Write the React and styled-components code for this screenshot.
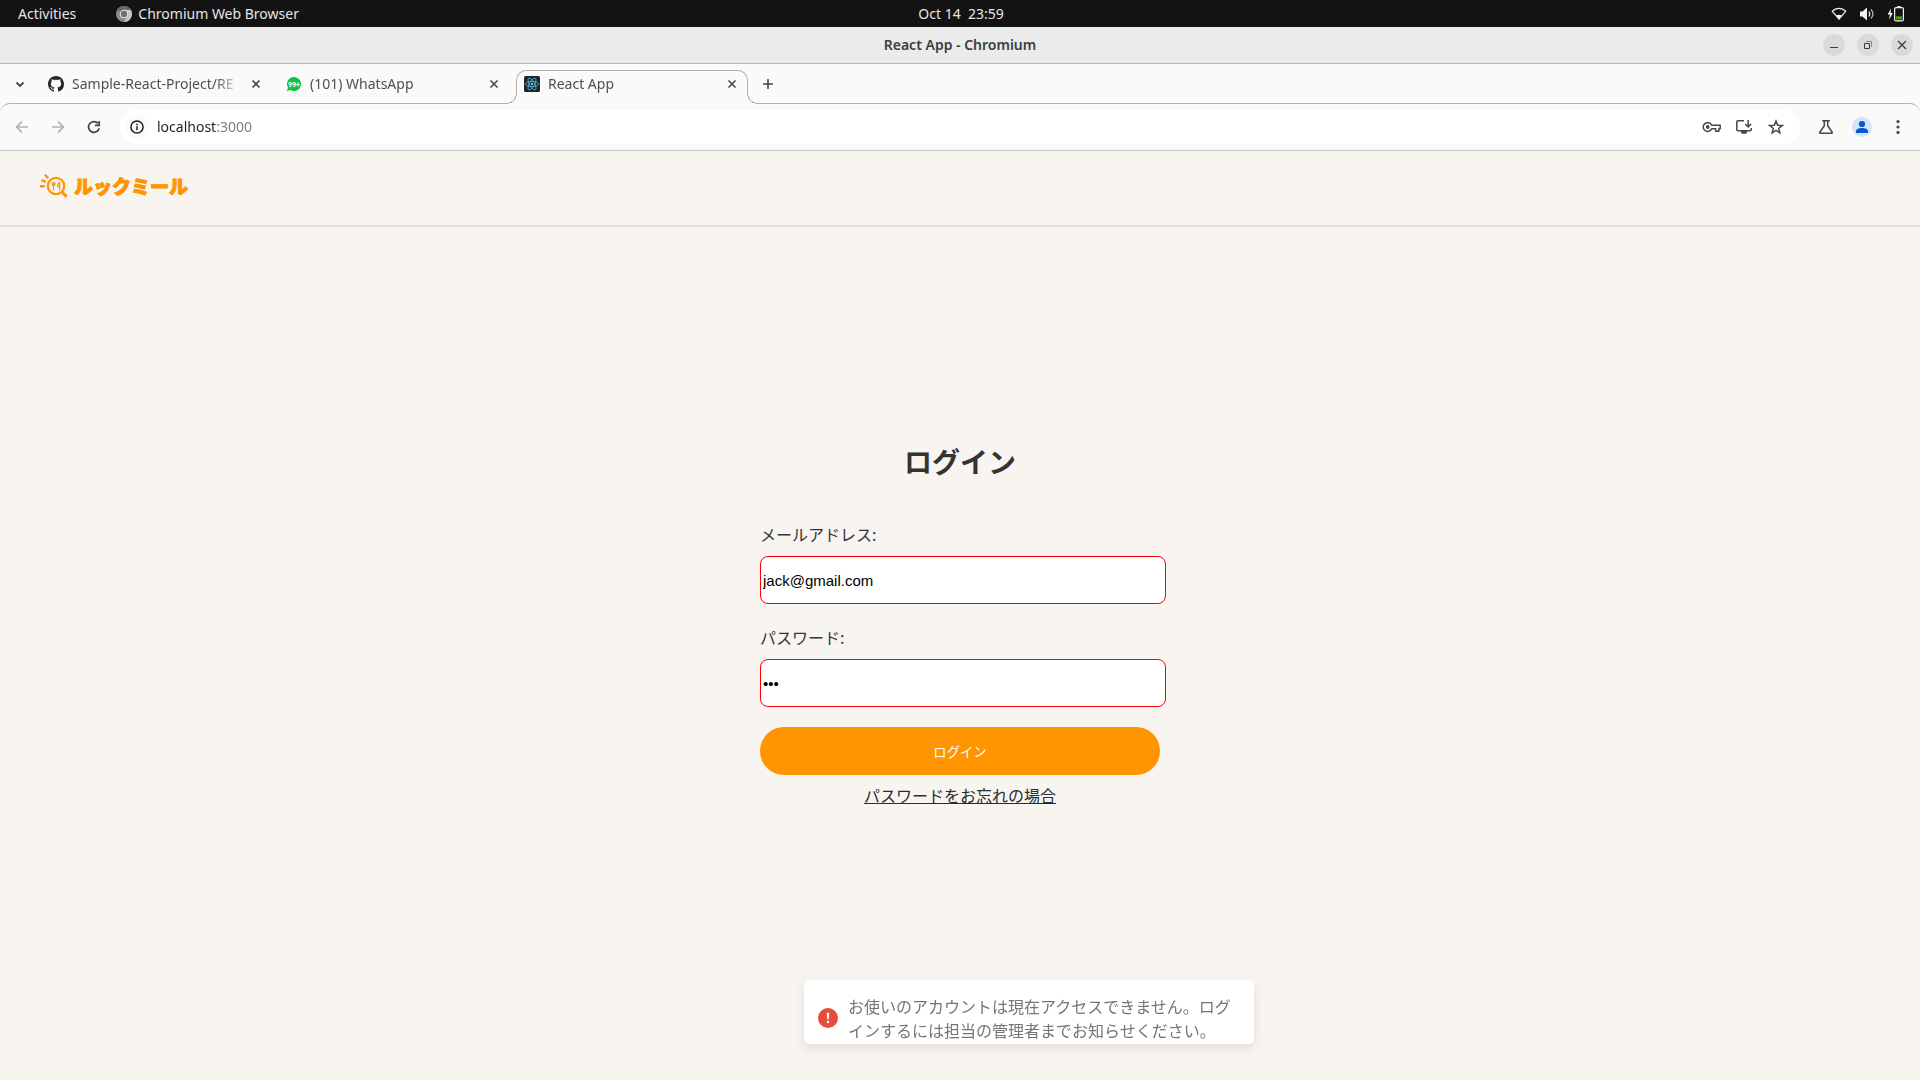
import React, { useState } from "react";
import styled, { createGlobalStyle, css } from "styled-components";

const GlobalStyle = createGlobalStyle`
  *, *::before, *::after { box-sizing: border-box; }
  body { margin: 0; background: #f8f4ef; }
  button { border: 0; padding: 0; background: none; cursor: pointer; }
`;

const uiFont = '"Noto Sans", "Open Sans", sans-serif';
const pageFont = '"Noto Sans CJK JP", sans-serif';

const Desktop = styled.div`
  display: flex;
  flex-direction: column;
  min-height: 100vh;
  font-family: ${uiFont};
`;

/* ---------- system bar ---------- */

const SystemBar = styled.header`
  display: grid;
  grid-template-columns: 1fr auto 1fr;
  align-items: center;
  height: 27px;
  padding: 0 16px 0 18px;
  background: #131313;
  color: #e6e6e6;
  font-size: 14px;
  line-height: 20px;
`;

const SystemGroup = styled.div`
  display: flex;
  align-items: center;
  justify-content: ${(p) => (p.$end ? "flex-end" : "flex-start")};
  gap: ${(p) => (p.$end ? "12px" : "40px")};
`;

const SystemItem = styled.button`
  display: flex;
  align-items: center;
  gap: 6px;
  color: inherit;
  font: inherit;
  white-space: pre;
`;

/* ---------- window title ---------- */

const TitleBar = styled.div`
  display: grid;
  grid-template-columns: 1fr auto 1fr;
  align-items: center;
  height: 37px;
  padding: 0 7px;
  background: #ebebeb;
  border-bottom: 1px solid #b8b8b8;
  color: #3d3d3d;
`;

const WindowTitle = styled.span`
  grid-column: 2;
  font-size: 14px;
  line-height: 20px;
  font-weight: 600;
`;

const WindowControls = styled.div`
  display: flex;
  justify-content: flex-end;
  gap: 12px;
`;

const WindowButton = styled.button`
  display: grid;
  place-items: center;
  width: 22px;
  height: 22px;
  border-radius: 50%;
  background: #dadada;
`;

/* ---------- tabs ---------- */

const TabStrip = styled.div`
  display: flex;
  align-items: flex-end;
  gap: 6px;
  height: 39px;
  padding: 0 6px;
  background: #fafafa;
`;

const StripButton = styled.button`
  display: grid;
  place-items: center;
  width: 28px;
  height: 28px;
  margin-bottom: 5px;
`;

const activeTab = css`
  border-color: #b0b0b0;
  background: #fafafa;

  &::before,
  &::after {
    content: "";
    position: absolute;
    bottom: 0;
    width: 11px;
    height: 11px;
  }
  &::before {
    left: -11px;
    background: radial-gradient(circle at 0 0, #fafafa 10px, #b0b0b0 10px, #b0b0b0 11px, #fafafa 11px);
  }
  &::after {
    right: -11px;
    background: radial-gradient(circle at 100% 0, #fafafa 10px, #b0b0b0 10px, #b0b0b0 11px, #fafafa 11px);
  }
`;

const Tab = styled.div`
  position: relative;
  z-index: 1;
  display: flex;
  align-items: center;
  gap: 8px;
  width: 232px;
  height: 34px;
  margin-bottom: -1px;
  padding: 0 7px 7px;
  border: 1px solid transparent;
  border-bottom: 0;
  border-radius: 10px 10px 0 0;
  ${(p) => p.$active && activeTab}
`;

const TabLabel = styled.span`
  flex: 1;
  min-width: 0;
  overflow: hidden;
  white-space: nowrap;
  color: #4f4f4f;
  font-size: 14px;
  line-height: 20px;
  mask-image: linear-gradient(to right, #000 calc(100% - 24px), transparent);
`;

const TabClose = styled.button`
  display: grid;
  place-items: center;
  width: 16px;
  height: 16px;
`;

/* ---------- toolbar ---------- */

const Toolbar = styled.div`
  display: flex;
  align-items: center;
  gap: 12px;
  height: 48px;
  padding: 0 8px;
  background: #fafafa;
  border-top: 1px solid #b0b0b0;
  border-bottom: 1px solid #c4c4c4;
  border-radius: 10px 10px 0 0;
`;

const ToolbarShell = styled.div`
  background: #fafafa;
`;

const ToolGroup = styled.div`
  display: flex;
  gap: 8px;
`;

const ToolButton = styled.button`
  display: grid;
  place-items: center;
  width: 28px;
  height: 28px;
`;

const Omnibox = styled.div`
  display: flex;
  flex: 1;
  align-items: center;
  height: 34px;
  padding: 0 10px 0 5px;
  border-radius: 17px;
  background: #fff;
`;

const SiteInfo = styled.button`
  display: grid;
  place-items: center;
  width: 24px;
  height: 24px;
  border-radius: 50%;
  background: #fafafa;
`;

const AddressInput = styled.input`
  flex: 1;
  min-width: 0;
  margin-left: 8px;
  padding: 0;
  border: 0;
  outline: 0;
  font-family: ${uiFont};
  font-size: 14px;
  line-height: 20px;
  color: #7a7a7a;
  background: linear-gradient(to right, #1f1f1f 59px, #7a7a7a 59px);
  background-clip: text;
  -webkit-text-fill-color: transparent;
`;

const OmniActions = styled.div`
  display: flex;
  gap: 4px;
`;

/* ---------- web page ---------- */

const Page = styled.div`
  display: flex;
  flex: 1;
  flex-direction: column;
  background: #f8f4ef;
  color: #333;
  font-family: ${pageFont};
`;

const SiteHeader = styled.header`
  height: 76px;
  padding: 21px 40px;
  border-bottom: 2px solid #dedede;
`;

const Brand = styled.a`
  display: inline-flex;
  align-items: center;
  gap: 6px;
  color: #ff9500;
  text-decoration: none;
`;

const BrandName = styled.span`
  font-size: 19px;
  line-height: 28px;
  font-weight: 900;
  -webkit-text-stroke: 1px #ff9500;
`;

const Main = styled.main`
  display: flex;
  flex: 1;
  flex-direction: column;
  align-items: center;
  justify-content: center;
  padding-bottom: 59px;
`;

const LoginForm = styled.form`
  display: flex;
  flex-direction: column;
  width: 400px;
`;

const Heading = styled.h1`
  margin: 0 0 39px;
  font-size: 28px;
  line-height: 42px;
  font-weight: 700;
  text-align: center;
`;

const Field = styled.div`
  display: flex;
  flex-direction: column;
  gap: 9px;
  margin-bottom: 20px;
`;

const FieldLabel = styled.label`
  font-size: 16px;
  line-height: 26px;
`;

const FieldInput = styled.input`
  width: 406px;
  height: 48px;
  padding: 1px 2px;
  border: 1px solid #f00;
  border-radius: 8px;
  outline: 0;
  background: #fff;
  color: #000;
  font-family: "Liberation Sans", Arial, sans-serif;
  font-size: 15px;
`;

const SubmitButton = styled.button`
  height: 48px;
  border-radius: 24px;
  background: #ff9500;
  color: #fff;
  font-family: ${pageFont};
`;

const ForgotLink = styled.a`
  align-self: center;
  margin-top: 7px;
  color: #282c34;
  font-size: 16px;
  line-height: 26px;
`;

const ToastArea = styled.div`
  position: fixed;
  bottom: 32px;
  left: 50%;
  width: 320px;
  padding: 4px;
  transform: translateX(-50%);
`;

const Toast = styled.div`
  display: flex;
  align-items: flex-start;
  gap: 10px;
  width: 450px;
  padding: 14px 14px 2px;
  border-radius: 5px;
  background: #fff;
  box-shadow: 0 4px 12px rgba(0, 0, 0, 0.1);
  color: #757575;
  font-size: 16px;
  line-height: 24px;
`;

const ToastIcon = styled.svg`
  flex: none;
  align-self: center;
`;

const ToastText = styled.p`
  margin: 0;
`;

/* ---------- icons ---------- */

const Stroke = ({ size = 16, color = "#474747", width = 1.6, d, ...rest }) => (
  <svg width={size} height={size} viewBox="0 0 16 16" fill="none" stroke={color} strokeWidth={width} {...rest}>
    <path d={d} />
  </svg>
);

const ChromiumIcon = () => (
  <svg width="16" height="16" viewBox="0 0 16 16">
    <circle cx="8" cy="8" r="8" fill="#8c8c8c" />
    <path d="M8 8 1.1 4A8 8 0 0 1 14.9 4z" fill="#6a6a6a" />
    <path d="M8 4h6.9A8 8 0 0 1 8 16l3.5-6z" fill="#c6c6c6" />
    <circle cx="8" cy="8" r="4.3" fill="#e8e8e8" />
    <circle cx="8" cy="8" r="3.2" fill="#707070" />
  </svg>
);

const WifiIcon = () => (
  <svg width="16" height="16" viewBox="0 0 16 16">
    <path d="M1.2 5.2C5 1.5 11 1.5 14.8 5.2L8 13.2z" fill="none" stroke="#f2f2f2" strokeWidth="1.2" strokeLinejoin="round" />
    <path d="M5 9.8c1.8-1.4 4.2-1.4 6 0L8 13.6z" fill="#f2f2f2" />
  </svg>
);

const VolumeIcon = () => (
  <svg width="16" height="16" viewBox="0 0 16 16">
    <path d="M1 5.5h2.5L8 1.500v13L3.5 10.5H1z" fill="#f2f2f2" />
    <path d="M9.8 5.5c1.2 1.5 1.2 3.5 0 5" fill="none" stroke="#f2f2f2" strokeWidth="1.2" />
    <path d="M12 3.5c2.4 2.7 2.4 6.3 0 9" fill="none" stroke="#bdbdbd" strokeWidth="1.2" />
  </svg>
);

const BatteryIcon = () => (
  <svg width="17" height="16" viewBox="0 0 17 16">
    <path d="M4 2.5.6 8.6h2.2l-.6 5L5.800 7H3.600z" fill="#f2f2f2" />
    <path d="M10 .2h4v1.5h-4z" fill="#f2f2f2" />
    <rect x="7.6" y="1.6" width="8.8" height="13.3" rx="1.5" fill="none" stroke="#f2f2f2" strokeWidth="1.2" />
    <rect x="9" y="10.300" width="6" height="3.2" fill="#4e9a06" />
  </svg>
);

const GithubIcon = () => (
  <svg width="16" height="16" viewBox="0 0 16 16" fill="#24292f">
    <path d="M8 0C3.58 0 0 3.58 0 8c0 3.54 2.29 6.53 5.47 7.59.4.07.55-.17.55-.38 0-.19-.01-.82-.01-1.49-2.01.37-2.53-.49-2.69-.94-.09-.23-.48-.94-.82-1.13-.28-.15-.68-.52-.01-.53.63-.01 1.08.58 1.23.82.72 1.21 1.87.87 2.33.66.07-.52.28-.87.51-1.07-1.78-.2-3.64-.89-3.64-3.95 0-.87.31-1.59.82-2.15-.08-.2-.36-1.02.08-2.12 0 0 .67-.21 2.2.82.64-.18 1.32-.27 2-.27s1.36.09 2 .27c1.53-1.04 2.2-.82 2.2-.82.44 1.1.16 1.92.08 2.12.51.56.82 1.27.82 2.15 0 3.07-1.87 3.75-3.65 3.95.29.25.54.73.54 1.48 0 1.07-.01 1.93-.01 2.2 0 .21.15.46.55.38A8.01 8.01 0 0 0 16 8c0-4.42-3.58-8-8-8z" />
  </svg>
);

const WhatsAppIcon = () => (
  <svg width="16" height="16" viewBox="0 0 16 16">
    <path d="M8 1a7 7 0 1 1-3.4 13.1L1 15l1-3.4A7 7 0 0 1 8 1z" fill="#12c144" />
    <text x="8" y="10.6" textAnchor="middle" fill="#fff" fontFamily="Roboto, sans-serif" fontSize="7" fontWeight="700">99+</text>
  </svg>
);

const ReactIcon = () => (
  <svg width="16" height="16" viewBox="0 0 16 16">
    <rect width="16" height="16" rx="1.5" fill="#20232a" />
    <g fill="none" stroke="#53b9d6" strokeWidth="0.8">
      <ellipse cx="8" cy="8" rx="6.6" ry="2.6" />
      <ellipse cx="8" cy="8" rx="6.6" ry="2.6" transform="rotate(60 8 8)" />
      <ellipse cx="8" cy="8" rx="6.6" ry="2.6" transform="rotate(120 8 8)" />
    </g>
    <circle cx="8" cy="8" r="1.2" fill="#61dafb" />
  </svg>
);

const ReloadIcon = () => (
  <svg width="16" height="16" viewBox="0 0 16 16" fill="none" stroke="#474747" strokeWidth="1.7">
    <path d="M13.2 9.2A5.4 5.4 0 1 1 12 4.4" />
    <path d="M13.2 2v4.3H8.9" />
  </svg>
);

const InfoIcon = () => (
  <svg width="16" height="16" viewBox="0 0 16 16">
    <circle cx="8" cy="8" r="6.1" fill="none" stroke="#1f1f1f" strokeWidth="1.5" />
    <path d="M7.250 7.2h1.5v4h-1.5zM7.250 4.7h1.5v1.5h-1.5z" fill="#1f1f1f" />
  </svg>
);

const KeyIcon = () => (
  <svg width="20" height="16" viewBox="0 0 20 16" fill="none" stroke="#474747" strokeWidth="1.5">
    <path d="M9.6 6.3A4.4 4.4 0 1 0 9.6 9.8H13.7v2.4h3.2V9.8h1.3V6.3z" strokeLinejoin="round" />
    <circle cx="5.7" cy="8" r="1.9" fill="#474747" stroke="none" />
  </svg>
);

const InstallIcon = () => (
  <svg width="18" height="16" viewBox="0 0 18 16" fill="none" stroke="#474747" strokeWidth="1.5">
    <path d="M9 1.8H3a1.2 1.2 0 0 0-1.2 1.2v7.6A1.2 1.2 0 0 0 3 11.8h12a1.2 1.2 0 0 0 1.2-1.2V9M13.2 1v6.6M10.3 5l2.9 2.9L16.1 5" />
    <path d="M6.2 11.8h5.6v2.9H6.2z" fill="#474747" stroke="none" />
  </svg>
);

const FlaskIcon = () => (
  <Stroke width={1.5} d="M4.2 1.8h7.6M6.3 1.8v4.9l-4.5 6.5c-.3.5 0 1 .5 1h11.4c.5 0 .8-.5.5-1L9.7 6.7V1.8" />
);

const AvatarIcon = () => (
  <svg width="20" height="20" viewBox="0 0 20 20">
    <circle cx="10" cy="10" r="10" fill="#d3e3fd" />
    <circle cx="10" cy="7" r="3.1" fill="#0b57d0" />
    <path d="M4 16v-1.8c0-2.2 3-3.2 6-3.2s6 1 6 3.2V16z" fill="#0b57d0" />
  </svg>
);

const DotsIcon = () => (
  <svg width="16" height="16" viewBox="0 0 16 16" fill="#474747">
    <circle cx="8" cy="2.6" r="1.6" />
    <circle cx="8" cy="8" r="1.6" />
    <circle cx="8" cy="13.4" r="1.6" />
  </svg>
);

const BrandMark = () => (
  <svg width="28" height="24" viewBox="0 0 28 24" fill="none" stroke="#ff9500">
    <circle cx="16" cy="12" r="8.2" strokeWidth="2.200" />
    <path d="M22 18l4.6 4.6" strokeWidth="3" />
    <path d="M5 .8l3.2 3.4M1.4 6.2l4.4 1.6M0 12.2h4.8" strokeWidth="2.4" />
    <path d="M12.200 8.300v2c0 1 .6 1.500 1.400 1.500s1.400-.5 1.400-1.500v-2M13.600 8.300v8" strokeWidth="1.200" />
    <path d="M19.600 8v8.300M19.400 8.400c-1.500 1.200-1.900 2.800-1.500 4.300h1.500" strokeWidth="1.200" />
  </svg>
);

const tabs = [
  { title: "Sample-React-Project/RE", Icon: GithubIcon },
  { title: "(101) WhatsApp", Icon: WhatsAppIcon },
  { title: "React App", Icon: ReactIcon, active: true },
];

const closePath = "M4 4l8 8M12 4l-8 8";
const tabClosePath = "M4.5 4.5l7 7M11.5 4.5l-7 7";

function BrowserChrome() {
  const [address, setAddress] = useState("localhost:3000");
  return (
    <>
      <SystemBar>
        <SystemGroup>
          <SystemItem>Activities</SystemItem>
          <SystemItem><ChromiumIcon />Chromium Web Browser</SystemItem>
        </SystemGroup>
        <SystemItem>{"Oct 14  23:59"}</SystemItem>
        <SystemGroup $end>
          <WifiIcon />
          <VolumeIcon />
          <BatteryIcon />
        </SystemGroup>
      </SystemBar>
      <TitleBar>
        <WindowTitle>React App - Chromium</WindowTitle>
        <WindowControls>
          <WindowButton aria-label="Minimize"><Stroke width={1} d="M4 10.5h8" color="#3d3d3d" /></WindowButton>
          <WindowButton aria-label="Restore">
            <svg width="16" height="16" viewBox="0 0 16 16" fill="none">
              <path d="M6 4.5h5.5V10" stroke="#8c8c8c" />
              <path d="M4.5 6.5h5v5h-5z" stroke="#3d3d3d" />
            </svg>
          </WindowButton>
          <WindowButton aria-label="Close"><Stroke width={1.3} d={closePath} color="#3d3d3d" /></WindowButton>
        </WindowControls>
      </TitleBar>
      <TabStrip>
        <StripButton aria-label="Search tabs"><Stroke width={1.8} d="M4.5 6.5L8 10l3.5-3.5" /></StripButton>
        {tabs.map(({ title, Icon, active }) => (
          <Tab key={title} $active={active}>
            <Icon />
            <TabLabel>{title}</TabLabel>
            <TabClose aria-label="Close tab"><Stroke d={tabClosePath} /></TabClose>
          </Tab>
        ))}
        <StripButton aria-label="New tab"><Stroke d="M8 3v10M3 8h10" /></StripButton>
      </TabStrip>
      <ToolbarShell>
        <Toolbar>
          <ToolGroup>
            <ToolButton aria-label="Back"><Stroke color="#b0b0b0" d="M14 8H3M8 2.6L2.6 8 8 13.4" /></ToolButton>
            <ToolButton aria-label="Forward"><Stroke color="#b0b0b0" d="M2 8h11M8 2.6L13.4 8 8 13.4" /></ToolButton>
            <ToolButton aria-label="Reload"><ReloadIcon /></ToolButton>
          </ToolGroup>
          <Omnibox>
            <SiteInfo aria-label="Site information"><InfoIcon /></SiteInfo>
            <AddressInput aria-label="Address" value={address} onChange={(e) => setAddress(e.target.value)} />
            <OmniActions>
              <ToolButton aria-label="Passwords"><KeyIcon /></ToolButton>
              <ToolButton aria-label="Install"><InstallIcon /></ToolButton>
              <ToolButton aria-label="Bookmark">
                <Stroke width={1.5} d="M8 2l1.7 4.2 4.5.3-3.5 2.9 1.2 4.4L8 11.4l-3.9 2.4 1.2-4.4L1.8 6.5l4.5-.3z" />
              </ToolButton>
            </OmniActions>
          </Omnibox>
          <ToolGroup>
            <ToolButton aria-label="Experiments"><FlaskIcon /></ToolButton>
            <ToolButton aria-label="Profile"><AvatarIcon /></ToolButton>
            <ToolButton aria-label="Menu"><DotsIcon /></ToolButton>
          </ToolGroup>
        </Toolbar>
      </ToolbarShell>
    </>
  );
}

function LoginPage() {
  const [email, setEmail] = useState("jack@gmail.com");
  const [password, setPassword] = useState("123");
  return (
    <Page lang="ja">
      <SiteHeader>
        <Brand href="#">
          <BrandMark />
          <BrandName>ルックミール</BrandName>
        </Brand>
      </SiteHeader>
      <Main>
        <LoginForm onSubmit={(e) => e.preventDefault()}>
          <Heading>ログイン</Heading>
          <Field>
            <FieldLabel htmlFor="email">メールアドレス:</FieldLabel>
            <FieldInput id="email" type="email" value={email} onChange={(e) => setEmail(e.target.value)} />
          </Field>
          <Field>
            <FieldLabel htmlFor="password">パスワード:</FieldLabel>
            <FieldInput id="password" type="password" value={password} onChange={(e) => setPassword(e.target.value)} />
          </Field>
          <SubmitButton type="submit">ログイン</SubmitButton>
          <ForgotLink href="#">パスワードをお忘れの場合</ForgotLink>
        </LoginForm>
      </Main>
      <ToastArea>
        <Toast role="alert">
          <ToastIcon width="20" height="20" viewBox="0 0 20 20">
            <circle cx="10" cy="10" r="10" fill="#e74c3c" />
            <path d="M8.8 4.8h2.4l-.4 6.5H9.2z" fill="#fff" />
            <circle cx="10" cy="14" r="1.3" fill="#fff" />
          </ToastIcon>
          <ToastText>お使いのアカウントは現在アクセスできません。ログインするには担当の管理者までお知らせください。</ToastText>
        </Toast>
      </ToastArea>
    </Page>
  );
}

export default function App() {
  return (
    <Desktop>
      <GlobalStyle />
      <BrowserChrome />
      <LoginPage />
    </Desktop>
  );
}
